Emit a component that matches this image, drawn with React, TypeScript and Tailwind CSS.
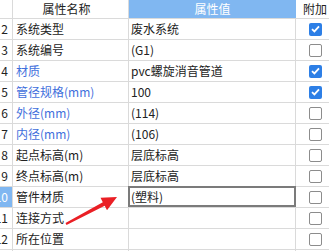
type Row = { n: string; name: string; value: string; blue?: boolean; checked?: boolean; active?: boolean };

const rows: Row[] = [
  { n: "2", name: "系统类型", value: "废水系统", checked: true },
  { n: "3", name: "系统编号", value: "(G1)" },
  { n: "4", name: "材质", value: "pvc螺旋消音管道", blue: true, checked: true },
  { n: "5", name: "管径规格(mm)", value: "100", blue: true, checked: true },
  { n: "6", name: "外径(mm)", value: "(114)", blue: true },
  { n: "7", name: "内径(mm)", value: "(106)", blue: true },
  { n: "8", name: "起点标高(m)", value: "层底标高" },
  { n: "9", name: "终点标高(m)", value: "层底标高" },
  { n: "10", name: "管件材质", value: "(塑料)", active: true },
  { n: "11", name: "连接方式", value: "" },
  { n: "12", name: "所在位置", value: "" },
  { n: "13", name: "", value: "" },
];

function Check({ on }: { on?: boolean }) {
  if (on)
    return (
      <div className="w-[13px] h-[13px] rounded-[2px] bg-[#2d7fe6] flex items-center justify-center">
        <svg width="9" height="8" viewBox="0 0 9 8">
          <path d="M1 4.2 L3.4 6.4 L8 1.4" stroke="#fff" strokeWidth="1.8" fill="none" />
        </svg>
      </div>
    );
  return <div className="w-[13px] h-[13px] rounded-[2px] border border-[#8c8c8c] bg-white" />;
}

export default function App() {
  return (
    <div
      className="relative w-[329px] h-[251px] overflow-hidden bg-white text-[12px] text-[#222]"
      style={{ fontFamily: '"Noto Sans CJK SC", "Noto Sans", sans-serif' }}
    >
      {/* header */}
      <div className="flex h-[19px] border-b border-[#dadada]">
        <div className="w-[13px] border-r border-[#dadada]" />
        <div className="w-[116px] border-r border-[#dadada] flex items-center justify-center pr-[8px]">属性名称</div>
        <div className="w-[167px] bg-[#80b7f1] text-white flex items-center justify-center">属性值</div>
        <div className="flex-1 flex items-center pl-[7px] whitespace-nowrap">附加</div>
      </div>

      {rows.map((r) => (
        <div key={r.n} className="flex h-[21px] border-b border-[#dadada]">
          <div
            className={
              "w-[13px] border-r border-[#dadada] flex items-center justify-end pr-[4px] overflow-hidden whitespace-nowrap " +
              (r.active ? "bg-[#80b7f1] text-white" : "")
            }
          >
            {r.n}
          </div>
          <div
            className={
              "w-[116px] border-r border-[#dadada] flex items-center pl-[3px] whitespace-nowrap " +
              (r.blue ? "text-[#3f6fdc]" : "")
            }
          >
            {r.name}
          </div>
          <div className="relative w-[167px] border-r border-[#dadada] flex items-center pl-[2px] whitespace-nowrap">
            {r.value}
            {r.active && (
              <div className="absolute -top-[1px] -left-[1px] -right-[1px] bottom-0 border-2 border-[#7b7b7b]" />
            )}
          </div>
          <div className="flex-1 flex items-center pl-[13px]">
            <Check on={r.checked} />
          </div>
        </div>
      ))}

      {/* annotation arrow */}
      <svg className="absolute left-0 top-0 pointer-events-none" width="329" height="251">
        <polygon
          points="65.5,223.1 102.8,202.3 100.5,197.8 117,197 107,210.2 104.7,205.8 66.5,224.9"
          fill="#ea1f25"
        />
      </svg>
    </div>
  );
}
